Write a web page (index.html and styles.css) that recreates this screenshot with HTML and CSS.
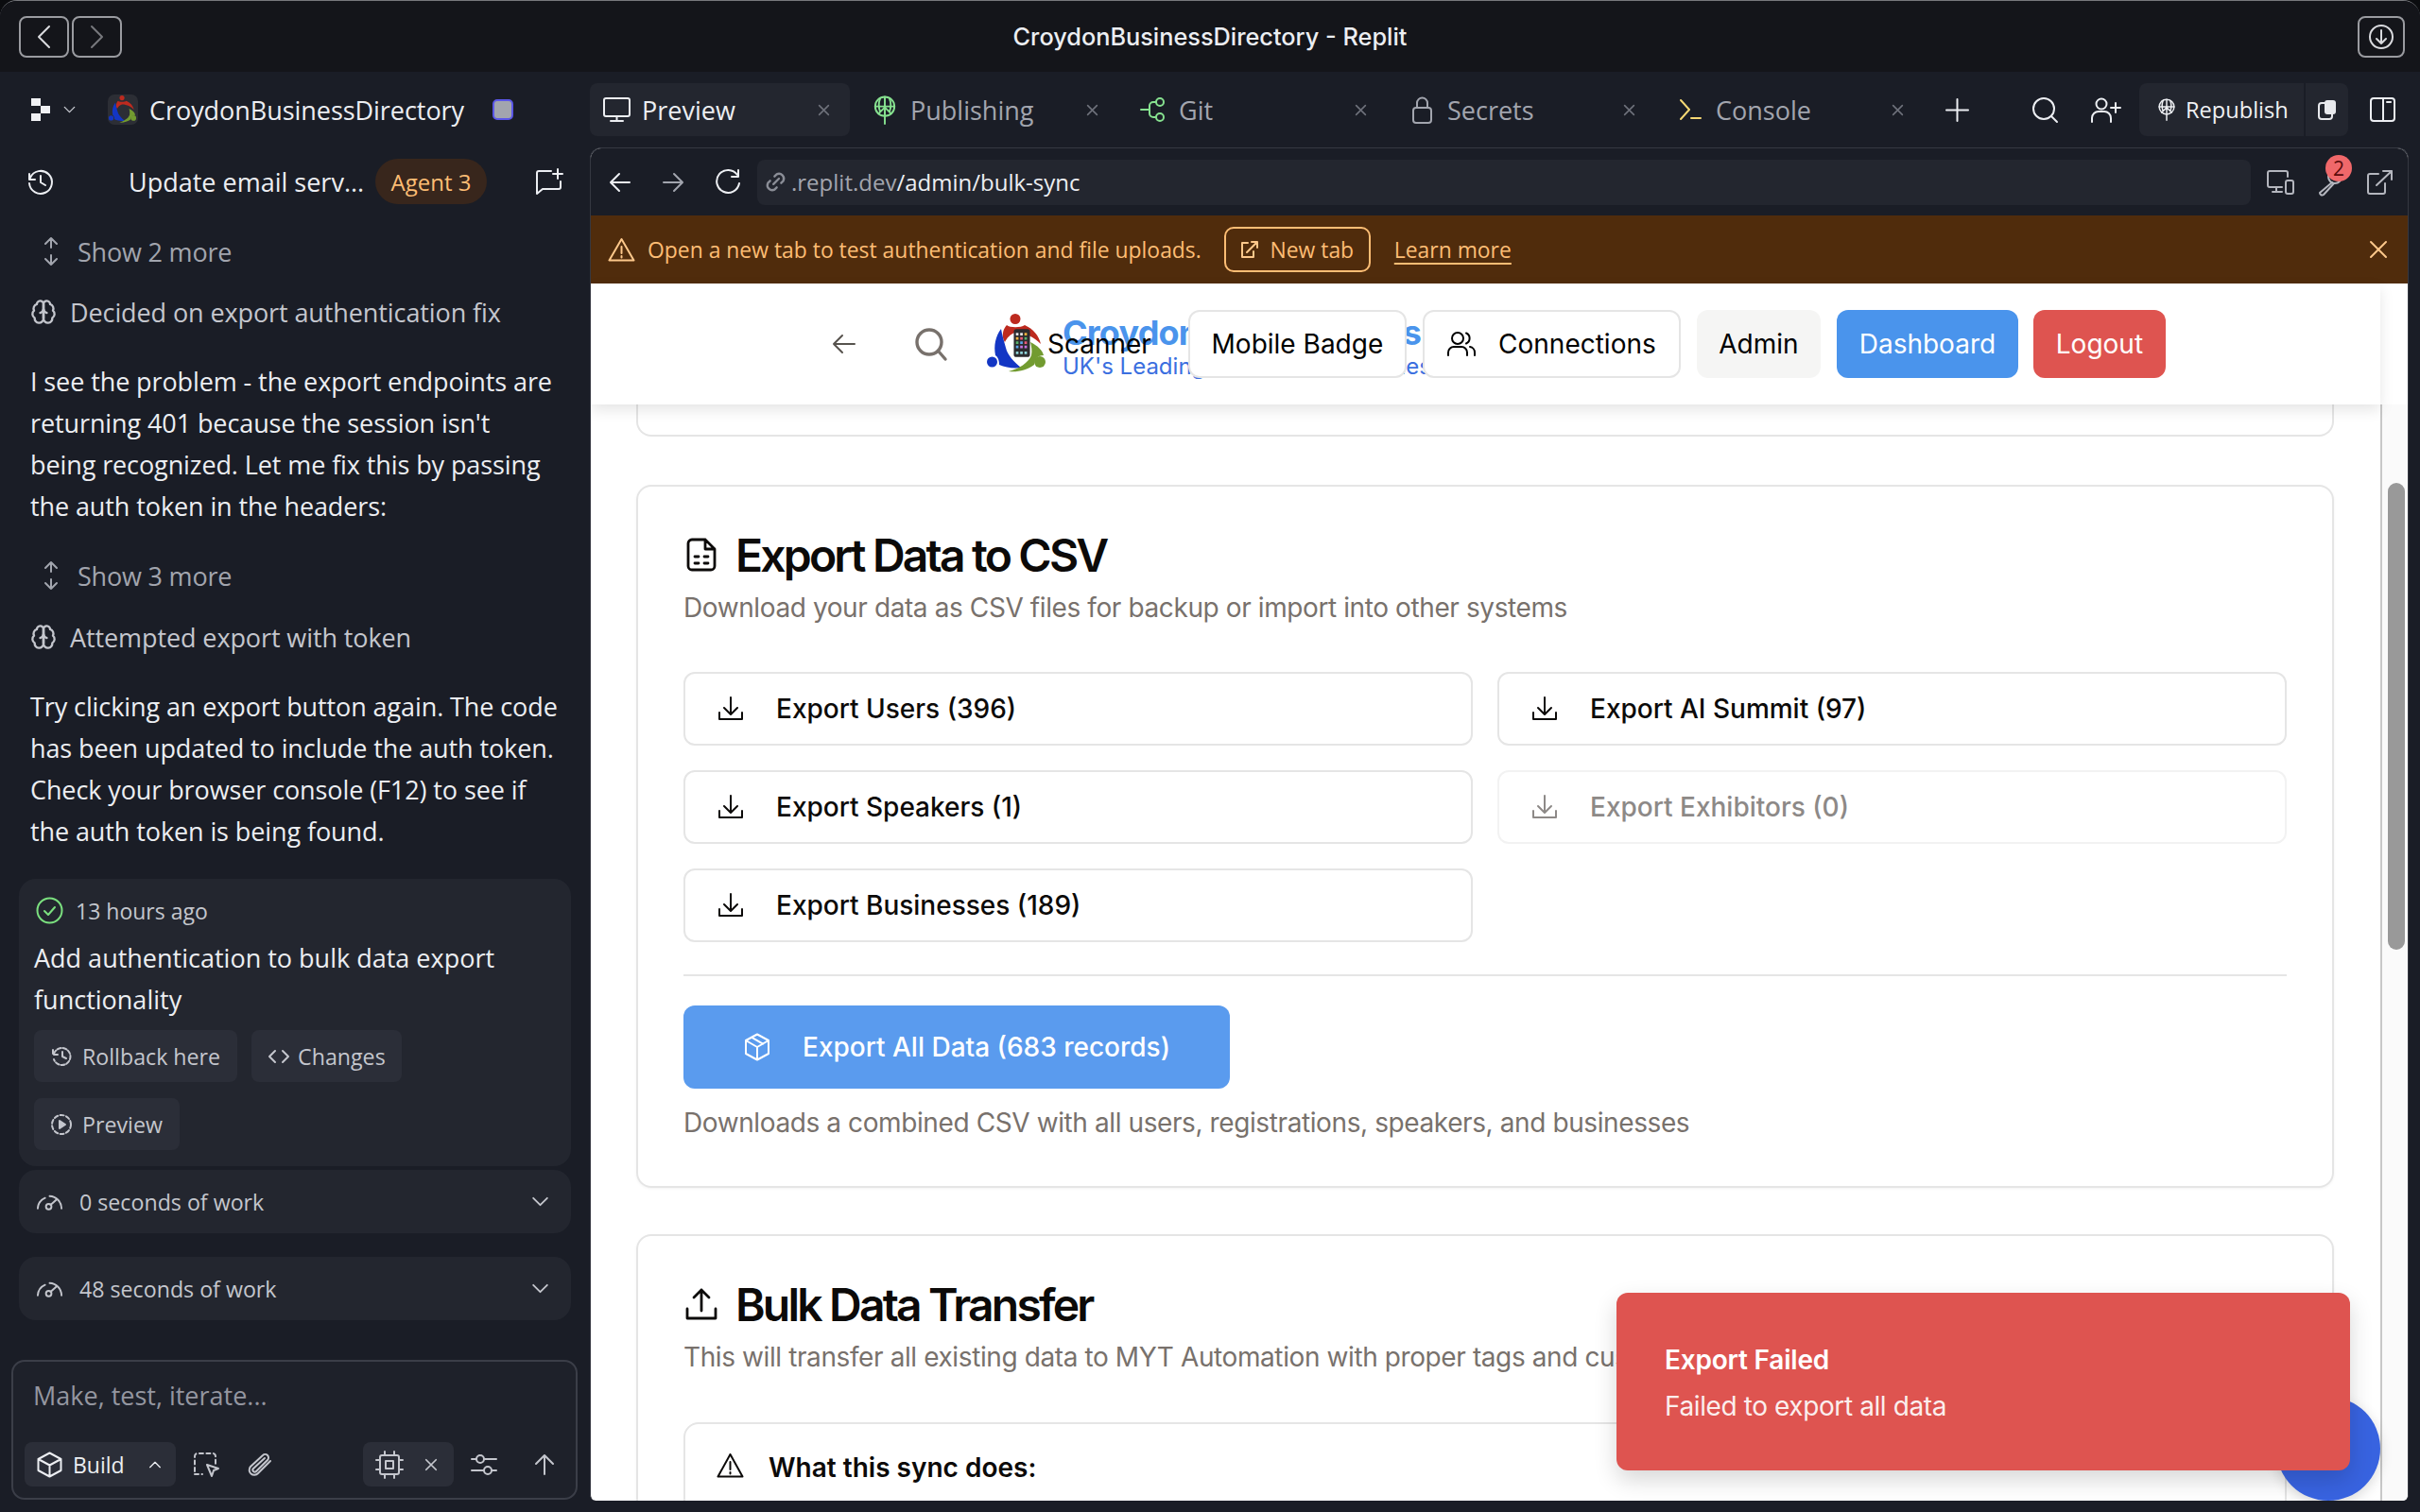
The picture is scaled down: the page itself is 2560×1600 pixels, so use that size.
FILE: index.html
```html
<!DOCTYPE html>
<html lang="en">
<head>
  <meta charset="UTF-8">
  <title>CroydonBusinessDirectory - Replit</title>
  <link rel="stylesheet" href="styles.css">
</head>
<body>
  <svg class="sprites" width="0" height="0" aria-hidden="true">
    <symbol id="i-close" viewBox="0 0 16 16"><path d="M2 2l12 12M14 2L2 14"/></symbol>
    <symbol id="i-chev-down" viewBox="0 0 20 12"><path d="M2 2l8 8 8-8"/></symbol>
    <symbol id="i-gauge" viewBox="0 0 30 18"><path d="M2 16a13.500 13.500 0 0 1 8-11.500M15 2.500a13.500 13.500 0 0 1 13 13.500"/><circle cx="14" cy="14" r="3"/><path d="M16 12l7-6"/></symbol>
    <symbol id="i-download" viewBox="0 0 28 28"><path d="M14 2v17M7 13l7 7 7-7M2 18v7h24v-7"/></symbol>
    <symbol id="i-globe" viewBox="0 0 24 32"><circle cx="12" cy="12" r="10.500"/><path d="M1.500 12h21M12 1.500V31M5 20l7-7 7 7M7 3c-2 5-2 10 0 15M17 3c2 5 2 10 0 15"/></symbol>
    <symbol id="i-brain" viewBox="0 0 24 24"><path d="M12 5a3 3 0 1 0-5.997.125 4 4 0 0 0-2.526 5.770 4 4 0 0 0 .556 6.588A4 4 0 1 0 12 18Z"/><path d="M12 5a3 3 0 1 1 5.997.125 4 4 0 0 1 2.526 5.770 4 4 0 0 1-.556 6.588A4 4 0 1 1 12 18Z"/><path d="M12 5v13M15 13a4.500 4.500 0 0 1-3-4 4.500 4.500 0 0 1-3 4"/></symbol>
    <symbol id="i-updown" viewBox="0 0 16 32"><path d="M8 2v10M2 8l6-6 6 6M8 20v10M2 24l6 6 6-6"/></symbol>
    <symbol id="i-logo" viewBox="0 0 64 64">
      <circle cx="30" cy="5.500" r="5.500" fill="#bd2a1f"/>
      <path d="M21 12C24 15 36 15 40 12 49 16 55 23 57 32 50 25 42 20 30 20 25 21 21 26 19 30 15 24 17 16 21 12z" fill="#bd2a1f"/>
      <circle cx="5.500" cy="51" r="5.500" fill="#1336c4"/>
      <path d="M15 16C9 24 7 34 9 44 12 46 13 50 13 54 20 57 28 58 36 57 28 50 22 44 20 36 18 29 16 22 15 16z" fill="#1336c4"/>
      <circle cx="56" cy="51" r="6" fill="#729b30"/>
      <path d="M46 30C54 34 59 39 60 44 54 44 50 48 50 54 42 60 32 62 23 61 34 58 44 52 47 44 48 39 47 34 46 30z" fill="#729b30"/>
    </symbol>
  </svg>

  <div class="window">
    <header class="titlebar">
      <div class="hist-btns">
        <button class="frame-btn"><svg class="ic" width="15" height="26" viewBox="0 0 15 26"><path d="M13 2L2 13l11 11"/></svg></button>
        <button class="frame-btn frame-btn-dim"><svg class="ic" width="15" height="26" viewBox="0 0 15 26"><path d="M2 2l11 11L2 24"/></svg></button>
      </div>
      <div class="win-title">CroydonBusinessDirectory - Replit</div>
      <button class="frame-btn frame-btn-dl"><svg class="ic" width="26" height="26" viewBox="0 0 26 26"><circle cx="13" cy="13" r="12"/><path d="M13 6v14M8 15l5 5 5-5"/></svg></button>
    </header>

    <div class="workspace">
      <aside class="sidebar">
        <div class="side-head">
          <svg class="replit-mark" width="20" height="24" viewBox="0 0 20 24"><path d="M0 0h10v8H0zM10 8h10v8H10zM0 16h10v8H0z" fill="#f0f1f4"/></svg>
          <svg class="ic chev-small" width="13" height="8"><use href="#i-chev-down"/></svg>
          <span class="app-icon"><svg width="30" height="30"><use href="#i-logo"/></svg></span>
          <span class="app-name">CroydonBusinessDirectory</span>
          <span class="app-status"></span>
        </div>

        <div class="agent-row">
          <svg class="ic" width="29" height="26" viewBox="0 0 29 26"><path d="M3 5v6h6M4 9a12 12 0 1 1-1 6M15 7v7l5 3"/></svg>
          <span class="agent-title">Update email serv...</span>
          <span class="agent-pill">Agent 3</span>
          <svg class="ic new-chat" width="28" height="28" viewBox="0 0 28 28"><path d="M16 3H3a2 2 0 0 0-2 2v22l6-5h17a2 2 0 0 0 2-2v-6M23 1v10M18 6h10"/></svg>
        </div>

        <div class="show-more"><svg class="ic" width="16" height="32"><use href="#i-updown"/></svg>Show 2 more</div>
        <div class="thought thought-a"><svg class="ic" width="28" height="28"><use href="#i-brain"/></svg>Decided on export authentication fix</div>
        <p class="agent-text">I see the problem - the export endpoints are returning 401 because the session isn't being recognized. Let me fix this by passing the auth token in the headers:</p>

        <div class="show-more show-more-b"><svg class="ic" width="16" height="32"><use href="#i-updown"/></svg>Show 3 more</div>
        <div class="thought thought-b"><svg class="ic" width="28" height="28"><use href="#i-brain"/></svg>Attempted export with token</div>
        <p class="agent-text">Try clicking an export button again. The code has been updated to include the auth token. Check your browser console (F12) to see if the auth token is being found.</p>

        <section class="checkpoint">
          <div class="cp-time">
            <svg class="ic cp-check" width="29" height="29" viewBox="0 0 29 29"><circle cx="14.500" cy="14.500" r="13"/><path d="M9 15l4 4 7-8"/></svg>
            13 hours ago
          </div>
          <div class="cp-title">Add authentication to bulk data export functionality</div>
          <div class="cp-actions">
            <button class="cp-btn"><svg class="ic" width="22" height="20" viewBox="0 0 22 20"><path d="M2 3v5h5M3 7a9 9 0 1 1 0 6" stroke-dasharray="4 2"/><path d="M12 5v5l4 2"/></svg>Rollback here</button>
            <button class="cp-btn cp-btn-code"><svg class="ic" width="24" height="16" viewBox="0 0 24 16"><path d="M8 2L2 8l6 6M16 2l6 6-6 6"/></svg>Changes</button>
            <button class="cp-btn"><svg class="ic" width="22" height="22" viewBox="0 0 22 22"><circle cx="11" cy="11" r="10" stroke-dasharray="4 2.500"/><path d="M9 7l6 4-6 4z" fill="currentColor"/></svg>Preview</button>
          </div>
        </section>

        <div class="work-row"><svg class="ic" width="29" height="18"><use href="#i-gauge"/></svg><span>0 seconds of work</span><svg class="ic work-chev" width="19" height="11"><use href="#i-chev-down"/></svg></div>
        <div class="work-row work-row-b"><svg class="ic" width="29" height="18"><use href="#i-gauge"/></svg><span>48 seconds of work</span><svg class="ic work-chev" width="19" height="11"><use href="#i-chev-down"/></svg></div>

        <div class="composer">
          <div class="composer-hint">Make, test, iterate...</div>
          <div class="composer-tools">
            <div class="chip chip-build">
              <svg class="ic" width="27" height="28" viewBox="0 0 27 28"><path d="M13.500 1.500l12 6.500v12l-12 6.500-12-6.500V8zM1.500 8l12 6.500L25.500 8M13.500 14.500v12"/></svg>
              <span>Build</span>
              <svg class="ic chev-up" width="14" height="8" viewBox="0 0 20 12"><path d="M2 10l8-8 8 8"/></svg>
            </div>
            <svg class="ic tool-select" width="27" height="26" viewBox="0 0 27 26"><path d="M1 20V4a3 3 0 0 1 3-3h16a3 3 0 0 1 3 3v8M1 23h8" stroke-dasharray="4 3.500"/><path d="M14 13l12 4-5 2-2 6z"/></svg>
            <svg class="ic tool-clip" width="26" height="26" viewBox="0 0 26 26"><path d="M24 9L11 22a5 5 0 0 1-8-7L16 3a3.500 3.500 0 0 1 5 5L9 20a2 2 0 0 1-3-3L18 6"/></svg>
            <div class="chip chip-model">
              <svg class="ic" width="30" height="30" viewBox="0 0 30 30"><rect x="5" y="5" width="20" height="20" rx="2"/><rect x="11" y="11" width="8" height="8"/><path d="M10 1v4M20 1v4M10 25v4M20 25v4M1 10h4M1 20h4M25 10h4M25 20h4"/></svg>
              <svg class="ic" width="14" height="14"><use href="#i-close"/></svg>
            </div>
            <svg class="ic tool-sliders" width="28" height="22" viewBox="0 0 28 22"><path d="M1 5h5M15 5h12M1 17h13M22 17h5"/><circle cx="10" cy="5" r="4"/><circle cx="18" cy="17" r="4"/></svg>
            <svg class="ic tool-send" width="22" height="22" viewBox="0 0 22 22"><path d="M11 21V2M2 10l9-9 9 9"/></svg>
          </div>
        </div>
      </aside>

      <main class="main">
        <div class="tabs">
          <div class="tab tab-active">
            <span class="tab-icon"><svg class="ic ic-light" width="29" height="26" viewBox="0 0 29 26"><rect x="1" y="1" width="27" height="19" rx="2"/><path d="M14.500 20v5M8 25h13"/></svg></span>
            <span class="tab-name">Preview</span>
            <svg class="ic tab-close" width="13" height="13"><use href="#i-close"/></svg>
          </div>
          <div class="tab">
            <span class="tab-icon"><svg class="ic ic-green" width="24" height="31"><use href="#i-globe"/></svg></span>
            <span class="tab-name">Publishing</span>
            <svg class="ic tab-close" width="13" height="13"><use href="#i-close"/></svg>
          </div>
          <div class="tab">
            <span class="tab-icon"><svg class="ic ic-green" width="28" height="26" viewBox="0 0 28 26"><circle cx="21" cy="5" r="4"/><circle cx="21" cy="21" r="4"/><path d="M1 13h9M17 5h-3a4 4 0 0 0-4 4v8a4 4 0 0 0 4 4h3"/></svg></span>
            <span class="tab-name">Git</span>
            <svg class="ic tab-close" width="13" height="13"><use href="#i-close"/></svg>
          </div>
          <div class="tab">
            <span class="tab-icon"><svg class="ic" width="21" height="29" viewBox="0 0 21 29"><rect x="1" y="12" width="19" height="16" rx="3"/><path d="M5 12V7a5.500 5.500 0 0 1 11 0v5"/></svg></span>
            <span class="tab-name">Secrets</span>
            <svg class="ic tab-close" width="13" height="13"><use href="#i-close"/></svg>
          </div>
          <div class="tab">
            <span class="tab-icon"><svg class="ic ic-yellow" width="24" height="22" viewBox="0 0 24 22"><path d="M2 1l9 10-9 10M13 20h10"/></svg></span>
            <span class="tab-name">Console</span>
            <svg class="ic tab-close" width="13" height="13"><use href="#i-close"/></svg>
          </div>
          <svg class="ic ic-light tab-plus" width="23" height="23" viewBox="0 0 23 23"><path d="M11.500 0v23M0 11.500h23"/></svg>
          <svg class="ic ic-light head-search" width="27" height="26" viewBox="0 0 27 26"><circle cx="12" cy="12" r="11"/><path d="M20 20l6 6"/></svg>
          <svg class="ic ic-light head-invite" width="32" height="26" viewBox="0 0 32 26"><circle cx="12" cy="7" r="5.500"/><path d="M2 26v-4a7 7 0 0 1 7-7h6a7 7 0 0 1 7 7v4M27 6v10M22 11h10"/></svg>
          <div class="republish">
            <span class="republish-main">
              <svg class="ic ic-light" width="18" height="30"><use href="#i-globe"/></svg>
              Republish
            </span>
            <span class="republish-side">
              <svg width="20" height="22" viewBox="0 0 20 22"><rect x="1" y="4" width="14" height="17" rx="3" fill="none" stroke="#e8e9ed" stroke-width="2"/><rect x="7" y="1" width="12" height="15" rx="3" fill="#e8e9ed"/></svg>
            </span>
          </div>
          <svg class="ic ic-light head-panel" width="27" height="26" viewBox="0 0 27 26"><rect x="1" y="1" width="25" height="24" rx="3"/><path d="M14 1v24M18 5h4"/></svg>
        </div>

        <div class="pane">
          <div class="addressbar">
            <svg class="ic ic-light nav-back" width="21" height="20" viewBox="0 0 21 20"><path d="M21 10H2M10 1l-9 9 9 9"/></svg>
            <svg class="ic nav-fwd" width="21" height="20" viewBox="0 0 21 20"><path d="M0 10h19M11 1l9 9-9 9"/></svg>
            <svg class="ic ic-light nav-reload" width="30" height="27" viewBox="0 0 30 27"><path d="M25 6a12 12 0 1 0 2 9M26 1v7h-7"/></svg>
            <div class="url-field">
              <svg class="ic url-link" width="21" height="21" viewBox="1 1 18 18"><path d="M8 12l5-5M9 5l2-2a4.500 4.500 0 0 1 6 6l-2 2M11 15l-2 2a4.500 4.500 0 0 1-6-6l2-2"/></svg>
              <span class="url-host">.replit.dev</span><span class="url-path">/admin/bulk-sync</span>
            </div>
            <svg class="ic addr-devices" width="29" height="26" viewBox="0 0 29 26"><path d="M16 18H3a2 2 0 0 1-2-2V3a2 2 0 0 1 2-2h17a2 2 0 0 1 2 2v4M10 18v5M6 23h10"/><rect x="20" y="11" width="8" height="14" rx="2"/></svg>
            <span class="addr-key">
              <svg class="ic" width="26" height="28" viewBox="0 0 26 28"><path d="M16 14L3 25a2.500 2.500 0 0 0 4 2l11-12"/><circle cx="19" cy="8" r="7"/></svg>
              <span class="key-badge">2</span>
            </span>
            <svg class="ic addr-open" width="27" height="26" viewBox="0 0 27 26"><path d="M12 4H3a2 2 0 0 0-2 2v17a2 2 0 0 0 2 2h14a2 2 0 0 0 2-2v-9M10 16L26 1M17 1h9v9"/></svg>
          </div>

          <div class="warnbar">
            <svg class="ic warn-ic" width="29" height="26" viewBox="0 0 29 26"><path d="M14.500 2L1.500 24.500h26zM14.500 10v7M14.500 20v1.500"/></svg>
            <span class="warn-text">Open a new tab to test authentication and file uploads.</span>
            <button class="warn-btn"><svg class="ic warn-ic" width="20" height="20" viewBox="0 0 20 20"><path d="M8 3H2v15h12v-6M7 13L18 2M12 2h6v6"/></svg>New tab</button>
            <a class="warn-link">Learn more</a>
            <svg class="ic warn-ic warn-close" width="20" height="18" viewBox="0 0 20 18"><path d="M2 1l16 16M18 1L2 17"/></svg>
          </div>

          <nav class="site-nav">
            <svg class="ic nav-arrow" width="24" height="22" viewBox="0 0 24 22"><path d="M24 11H2M11 2l-9 9 9 9"/></svg>
            <svg class="ic nav-search" width="33" height="34" viewBox="0 0 33 34"><circle cx="15" cy="15" r="13"/><path d="M25 25l7 8"/></svg>
            <div class="brand">
              <svg class="brand-logo" width="64" height="64"><use href="#i-logo"/></svg>
              <svg class="brand-phone" width="18" height="34" viewBox="0 0 20 34">
                <rect x="0.500" y="0.500" width="19" height="33" rx="3" fill="#2b2b2e"/>
                <path d="M3 5h3v3H3zM8 5h3v3H8z" fill="#e8e8e8"/><path d="M13 5h3v3h-3zM3 10h3v3H3z" fill="#f3b33d"/>
                <path d="M8 10h3v3H8zM13 15h3v3h-3z" fill="#ea5a7a"/><path d="M13 10h3v3h-3zM3 15h3v3H3z" fill="#59b36b"/>
                <path d="M8 15h3v3H8zM3 20h3v3H3z" fill="#5aa6e8"/><path d="M8 20h3v3H8zM13 20h3v3h-3z" fill="#c873e0"/>
                <path d="M3 27h3v3H3zM8 27h3v3H8zM13 27h3v3h-3z" fill="#8fd3d8"/>
              </svg>
              <div class="brand-text">
                <div class="brand-name">Croydon Businesses</div>
                <div class="brand-tag">UK's Leading Business Directories</div>
              </div>
            </div>
            <a class="nav-link">Scanner</a>
            <a class="nav-btn nav-btn-line">Mobile Badge</a>
            <a class="nav-btn nav-btn-line nav-btn-conn"><svg class="ic" width="30" height="26" viewBox="0 0 30 26"><circle cx="11" cy="7" r="6"/><path d="M1 25v-3a6 6 0 0 1 6-6h8a6 6 0 0 1 6 6v3M20 1.500a6 6 0 0 1 0 11M24 16a6 6 0 0 1 5 6v3"/></svg>Connections</a>
            <a class="nav-btn nav-btn-soft">Admin</a>
            <a class="nav-btn nav-btn-blue">Dashboard</a>
            <a class="nav-btn nav-btn-red">Logout</a>
          </nav>

          <div class="page">
            <div class="page-body">
              <div class="card-stub"></div>

              <section class="card">
                <h2 class="card-title">
                  <svg class="ic title-file" width="32" height="36" viewBox="0 0 32 36"><path d="M20 2H6a4 4 0 0 0-4 4v24a4 4 0 0 0 4 4h20a4 4 0 0 0 4-4V12zM20 2v10h10M9 20h4M19 20h4M9 27h4M19 27h4"/></svg>
                  Export Data to CSV
                </h2>
                <p class="card-sub">Download your data as CSV files for backup or import into other systems</p>
                <div class="export-grid">
                  <button class="export-btn"><svg class="ic" width="28" height="28"><use href="#i-download"/></svg>Export Users (396)</button>
                  <button class="export-btn"><svg class="ic" width="28" height="28"><use href="#i-download"/></svg>Export AI Summit (97)</button>
                  <button class="export-btn"><svg class="ic" width="28" height="28"><use href="#i-download"/></svg>Export Speakers (1)</button>
                  <button class="export-btn export-btn-off"><svg class="ic" width="28" height="28"><use href="#i-download"/></svg>Export Exhibitors (0)</button>
                  <button class="export-btn"><svg class="ic" width="28" height="28"><use href="#i-download"/></svg>Export Businesses (189)</button>
                </div>
                <div class="card-rule"></div>
                <button class="export-all">
                  <svg class="ic" width="28" height="30" viewBox="0 0 28 30"><path d="M14 1.500l12 6.500v14l-12 6.500L2 22V8zM2 8l12 7 12-7M14 15v13.500M8 4.700l12 7"/></svg>
                  Export All Data (683 records)
                </button>
                <p class="card-note">Downloads a combined CSV with all users, registrations, speakers, and businesses</p>
              </section>

              <section class="card card-bulk">
                <h2 class="card-title">
                  <svg class="ic title-upload" width="34" height="34" viewBox="0 0 34 34"><path d="M17 24V2M9 10l8-8 8 8M2 22v10h30V22"/></svg>
                  Bulk Data Transfer
                </h2>
                <p class="card-sub">This will transfer all existing data to MYT Automation with proper tags and custom fields</p>
                <div class="sync-box">
                  <svg class="ic" width="29" height="27" viewBox="0 0 29 27"><path d="M14.500 2L1.500 25.500h26zM14.500 10v8M14.500 21v1.500"/></svg>
                  What this sync does:
                </div>
              </section>
            </div>

            <div class="scroll-track"><div class="scroll-thumb"></div></div>

            <div class="fab"></div>
            <div class="toast">
              <div class="toast-title">Export Failed</div>
              <div class="toast-text">Failed to export all data</div>
            </div>
          </div>
        </div>
      </main>
    </div>
  </div>
</body>
</html>
```

FILE: styles.css
```css
* {
  box-sizing: border-box;
}
html, body {
  margin: 0;
  padding: 0;
  background: #0b0c0f;
}
body {
  font-family: 'Open Sans', sans-serif;
  color: #f0f1f4;
}
button {
  font: inherit;
  color: inherit;
  border: none;
  background: none;
  padding: 0;
}
.sprites {
  position: absolute;
}
.ic {
  fill: none;
  stroke: currentColor;
  stroke-width: 2;
  stroke-linecap: round;
  stroke-linejoin: round;
  flex: none;
  overflow: visible;
}
.ic-light {
  color: #eceef2;
}
.ic-green {
  color: #86e08f;
}
.ic-yellow {
  color: #f5d874;
}

.window {
  width: 2560px;
  height: 1600px;
  display: flex;
  flex-direction: column;
  background: #1a1d26;
  overflow: hidden;
  border-radius: 18px 18px 0 0;
  border-top: 1px solid #77787c;
}

/* title bar */
.titlebar {
  height: 75px;
  flex: none;
  background: #14151a;
  display: flex;
  align-items: center;
  padding: 0 16px 0 20px;
  position: relative;
}
.hist-btns {
  display: flex;
  gap: 3px;
}
.frame-btn {
  width: 53px;
  height: 44px;
  border: 2px solid #9a9ba0;
  border-radius: 8px;
  display: flex;
  align-items: center;
  justify-content: center;
  color: #d9dade;
}
.frame-btn-dim {
  color: #77787d;
}
.frame-btn-dl {
  margin-left: auto;
  width: 50px;
}
.win-title {
  position: absolute;
  left: 0;
  right: 0;
  text-align: center;
  font-family: 'Inter', sans-serif;
  font-size: 25.3px;
  font-weight: 500;
  color: #eceef2;
}

.workspace {
  flex: 1;
  display: flex;
  min-height: 0;
}

/* left agent column */
.sidebar {
  width: 624px;
  flex: none;
  display: flex;
  flex-direction: column;
  font-size: 27px;
  color: #eceef2;
}
.side-head {
  height: 80px;
  flex: none;
  display: flex;
  align-items: center;
  padding-left: 33px;
}
.chev-small {
  margin-left: 14px;
  color: #c9cbd2;
}
.app-icon {
  width: 32px;
  height: 32px;
  margin-left: 34px;
  border-radius: 7px;
  background: #2c2e35;
  display: flex;
  align-items: center;
  justify-content: center;
}
.app-name {
  margin-left: 12px;
  font-size: 27px;
  letter-spacing: -0.05px;
}
.app-status {
  width: 22px;
  height: 22px;
  margin-left: 30px;
  border: 2px solid #5b57e8;
  border-radius: 5px;
  background: #a2a5ae;
}
.agent-row {
  height: 72px;
  flex: none;
  display: flex;
  align-items: center;
  padding-left: 28px;
}
.agent-title {
  margin-left: 79px;
  width: 261px;
  white-space: nowrap;
}
.agent-pill {
  width: 118px;
  height: 48px;
  border-radius: 24px;
  background: #38261c;
  color: #fdbd74;
  font-size: 24px;
  display: flex;
  align-items: center;
  justify-content: center;
}
.new-chat {
  margin-left: 52px;
}
.show-more {
  height: 40px;
  margin: 18px 0 0 46px;
  display: flex;
  align-items: center;
  gap: 20px;
  color: #a2a5ae;
  letter-spacing: -0.2px;
}
.show-more-b {
  margin-top: 31px;
}
.thought {
  height: 40px;
  margin: 24px 0 0 32px;
  display: flex;
  align-items: center;
  gap: 14px;
  color: #c4c6cd;
  letter-spacing: -0.1px;
}
.thought-b {
  margin-top: 25px;
}
.agent-text {
  margin: 32px 34px 0 32px;
  line-height: 44px;
  letter-spacing: -0.1px;
}
.checkpoint {
  margin: 28px 20px 0;
  height: 304px;
  flex: none;
  background: #23262f;
  border-radius: 18px;
  padding: 19px 16px 0;
}
.cp-time {
  height: 29px;
  display: flex;
  align-items: center;
  gap: 13px;
  padding-left: 2px;
  font-size: 23px;
  color: #c4c6cd;
}
.cp-check {
  color: #7be07f;
}
.cp-title {
  margin-top: 14px;
  line-height: 44px;
}
.cp-actions {
  display: flex;
  flex-wrap: wrap;
  gap: 17px 15px;
  margin-top: 10px;
}
.cp-btn {
  height: 55px;
  padding: 0 18px;
  background: #2b2e38;
  border-radius: 8px;
  display: flex;
  align-items: center;
  gap: 11px;
  font-size: 23.2px;
  color: #c4c6cd;
}
.cp-btn-code {
  padding: 0 17px;
  gap: 8px;
}
.work-row {
  margin: 4px 20px 0;
  height: 67px;
  flex: none;
  background: #23262f;
  border-radius: 18px;
  display: flex;
  align-items: center;
  padding-left: 18px;
  gap: 17px;
  font-size: 23.2px;
  color: #c4c6cd;
}
.work-row-b {
  margin-top: 25px;
}
.work-chev {
  margin-left: auto;
  margin-right: 23px;
}
.composer {
  margin: auto 13px 13px 12px;
  height: 148px;
  flex: none;
  border: 2px solid #3b3e48;
  border-radius: 14px;
  background: #1e212a;
  padding: 0 12px;
  display: flex;
  flex-direction: column;
}
.composer-hint {
  margin: 20px 0 0 9px;
  line-height: 32px;
  color: #9496a0;
}
.composer-tools {
  margin-top: auto;
  margin-bottom: 12px;
  display: flex;
  align-items: center;
  color: #c4c6cd;
}
.chip {
  height: 47px;
  background: #2b2e38;
  border-radius: 8px;
  display: flex;
  align-items: center;
}
.chip-build {
  width: 160px;
  padding-left: 13px;
  gap: 11px;
  font-size: 23px;
  color: #eceef2;
}
.chev-up {
  margin-left: auto;
  margin-right: 15px;
}
.tool-select {
  margin-left: 19px;
}
.tool-clip {
  margin-left: 30px;
}
.chip-model {
  width: 96px;
  margin-left: 96px;
  padding-left: 13px;
  gap: 22px;
}
.tool-sliders {
  margin-left: 18px;
}
.tool-send {
  margin-left: 39px;
}

/* right side */
.main {
  flex: 1;
  min-width: 0;
  display: flex;
  flex-direction: column;
  padding: 12px 12px 12px 0;
}
.tabs {
  height: 56px;
  flex: none;
  display: flex;
  align-items: center;
  gap: 9px;
  margin-right: -12px;
}
.tab {
  width: 275px;
  height: 56px;
  flex: none;
  border-radius: 8px;
  display: flex;
  align-items: center;
  padding: 0 21px 0 13px;
  color: #a2a5ae;
  font-size: 27px;
}
.tab-active {
  background: #23262f;
  color: #eceef2;
}
.tab-icon {
  width: 30px;
  margin-right: 12px;
  display: flex;
  justify-content: center;
}
.tab-close {
  margin-left: auto;
  color: #6d707a;
}
.tab-plus {
  margin-left: 15px;
}
.head-search {
  margin-left: 59px;
}
.head-invite {
  margin-left: 25px;
}
.republish {
  margin-left: 11px;
  width: 221px;
  height: 56px;
  flex: none;
  background: #23262f;
  border-radius: 8px;
  display: flex;
  font-size: 23.6px;
}
.republish-main {
  width: 176px;
  padding-left: 20px;
  display: flex;
  align-items: center;
  gap: 11px;
  border-right: 2px solid #1a1d26;
}
.republish-side {
  flex: 1;
  display: flex;
  align-items: center;
  justify-content: center;
}
.head-panel {
  margin-left: 14px;
}
.pane {
  flex: 1;
  min-height: 0;
  margin-top: 12px;
  display: flex;
  flex-direction: column;
  border: 1px solid #353841;
  border-bottom: none;
  border-radius: 12px 12px 6px 6px;
  overflow: hidden;
  background: #fff;
}
.addressbar {
  height: 71px;
  flex: none;
  background: #1a1d26;
  display: flex;
  align-items: center;
  padding-left: 20px;
}
.nav-fwd {
  margin-left: 36px;
  color: #a2a5ae;
}
.nav-reload {
  margin-left: 32px;
}
.url-field {
  width: 1580px;
  height: 48px;
  margin-left: 16px;
  background: #23262f;
  border-radius: 8px;
  display: flex;
  align-items: center;
  padding-left: 9px;
  font-size: 24px;
  white-space: nowrap;
}
.url-link {
  color: #8a8d96;
  margin-right: 6px;
}
.url-host {
  color: #a2a5ae;
}
.url-path {
  color: #eceef2;
}
.addr-devices,
.addr-key,
.addr-open {
  color: #b4b6be;
}
.addr-devices {
  margin-left: 17px;
}
.addr-key {
  margin-left: 24px;
  position: relative;
  display: flex;
}
.key-badge {
  position: absolute;
  left: 9px;
  top: -15px;
  width: 28px;
  height: 28px;
  border-radius: 50%;
  background: #f0686a;
  color: #5a0b0b;
  font-size: 21px;
  text-align: center;
  line-height: 28px;
}
.addr-open {
  margin-left: 27px;
}
.warnbar {
  height: 72px;
  flex: none;
  background: #502c0c;
  color: #fdbd74;
  display: flex;
  align-items: center;
  padding-left: 18px;
  font-size: 22.9px;
}
.warn-ic {
  color: #fdc88b;
}
.warn-text {
  margin-left: 13px;
  white-space: nowrap;
}
.warn-btn {
  width: 155px;
  height: 48px;
  margin-left: 24px;
  border: 2px solid #fdbd74;
  border-radius: 10px;
  display: flex;
  align-items: center;
  justify-content: center;
  gap: 11px;
}
.warn-link {
  margin-left: 25px;
  text-decoration: underline;
  text-underline-offset: 5px;
}
.warn-close {
  margin-left: auto;
  margin-right: 21px;
}

/* site nav inside the preview */
.site-nav {
  height: 128px;
  flex: none;
  position: relative;
  z-index: 2;
  margin-right: 29px;
  background: #fff;
  box-shadow: 0 6px 14px rgba(0, 0, 0, 0.1);
  display: flex;
  align-items: center;
  padding-left: 255px;
  font-family: 'Inter', sans-serif;
  font-size: 28px;
  color: #000;
}
.nav-arrow {
  color: #57534e;
}
.nav-search {
  color: #78716c;
  margin-left: 64px;
  stroke-width: 3.4;
}
.brand {
  width: 64px;
  height: 64px;
  margin-left: 43px;
  position: relative;
}
.brand-logo {
  display: block;
}
.brand-phone {
  position: absolute;
  left: 28px;
  top: 14px;
}
.brand-text {
  position: absolute;
  left: 80px;
  top: 0;
  white-space: nowrap;
}
.brand-name {
  font-size: 36px;
  font-weight: 700;
  line-height: 40px;
  letter-spacing: -0.8px;
  word-spacing: 33px;
  color: #4a94ec;
}
.brand-tag {
  font-size: 24px;
  line-height: 32px;
  color: #3b6fe0;
}
.nav-link {
  position: relative;
  margin-right: 39px;
}
.nav-btn {
  position: relative;
  height: 72px;
  padding: 0 26px;
  margin-right: 17px;
  border-radius: 12px;
  display: flex;
  align-items: center;
  background: #fff;
}
.nav-btn-line {
  border: 2px solid #e5e5e5;
  width: 231px;
  justify-content: center;
  padding: 0;
}
.nav-btn-conn {
  width: 273px;
  gap: 24px;
}
.nav-btn-soft {
  background: #f5f5f4;
  width: 131px;
  justify-content: center;
  padding: 0;
}
.nav-btn-blue {
  background: #4a94ec;
  color: #fff;
  width: 192px;
  justify-content: center;
  padding: 0;
  margin-right: 16px;
}
.nav-btn-red {
  background: #de5450;
  color: #fff;
  width: 140px;
  justify-content: center;
  padding: 0;
}

/* page content under the nav */
.page {
  flex: 1;
  min-height: 0;
  position: relative;
  display: flex;
  overflow: hidden;
  font-family: 'Inter', sans-serif;
  color: #0c0a09;
}
.page-body {
  flex: 1;
  min-width: 0;
  padding: 0 49px 0 48px;
}
.card-stub {
  height: 34px;
  border: 2px solid #e5e5e5;
  border-top: none;
  border-radius: 0 0 16px 16px;
}
.card {
  margin-top: 51px;
  border: 2px solid #e5e5e5;
  border-radius: 16px;
  padding: 48px 48px 51px;
  box-shadow: 0 1px 3px rgba(0, 0, 0, 0.05);
}
.card-bulk {
  margin-top: 49px;
}
.card-title {
  margin: 0;
  height: 48px;
  display: flex;
  align-items: center;
  gap: 20px;
  font-size: 48px;
  font-weight: 600;
  letter-spacing: -2.8px;
}
.card-title .ic {
  stroke-width: 2.8;
}
.title-file {
  margin-left: 3px;
}
.title-upload {
  margin-left: 2px;
  margin-right: -1px;
}
.card-sub {
  margin: 16px 0 0;
  font-size: 28px;
  line-height: 32px;
  letter-spacing: -0.4px;
  color: #78716c;
  white-space: nowrap;
}
.export-grid {
  display: grid;
  grid-template-columns: 1fr 1fr;
  gap: 26px;
  margin-top: 52px;
}
.export-btn {
  height: 78px;
  border: 2px solid #e5e5e5;
  border-radius: 12px;
  background: #fff;
  display: flex;
  align-items: center;
  gap: 34px;
  padding-left: 34px;
  font-family: 'Inter', sans-serif;
  font-size: 28px;
  font-weight: 450;
  color: #0c0a09;
}
.export-btn-off {
  border-color: #f2f2f2;
  color: #8d8987;
}
.card-rule {
  height: 2px;
  margin-top: 34px;
  background: #e5e5e5;
}
.export-all {
  width: 578px;
  height: 88px;
  margin-top: 31px;
  border-radius: 12px;
  background: #5a9bee;
  color: #fff;
  display: flex;
  align-items: center;
  gap: 34px;
  padding-left: 64px;
  font-family: 'Inter', sans-serif;
  font-size: 28px;
  font-weight: 450;
}
.card-note {
  margin: 20px 0 0;
  font-size: 28px;
  line-height: 32px;
  letter-spacing: -0.4px;
  color: #78716c;
}
.sync-box {
  margin-top: 53px;
  border: 2px solid #e5e5e5;
  border-radius: 16px;
  padding: 30px 33px 60px;
  display: flex;
  align-items: flex-start;
  gap: 26px;
  height: 160px;
  font-size: 28px;
  font-weight: 600;
  line-height: 32px;
}
.scroll-track {
  width: 29px;
  flex: none;
  background: #fafafa;
  border-left: 2px solid #c8c8c8;
  position: relative;
}
.scroll-thumb {
  position: absolute;
  left: 6px;
  right: 3px;
  top: 83px;
  height: 494px;
  border-radius: 10px;
  background: #999;
}
.fab {
  position: absolute;
  right: 29px;
  bottom: 0;
  width: 110px;
  height: 110px;
  border-radius: 50%;
  background: #3863e0;
  box-shadow: 0 4px 14px rgba(0, 0, 0, 0.15);
}
.toast {
  position: absolute;
  right: 61px;
  bottom: 32px;
  width: 776px;
  height: 188px;
  border-radius: 12px;
  background: #de5450;
  color: #fff;
  padding: 55px 51px 0;
  box-shadow: 0 10px 24px rgba(0, 0, 0, 0.16);
}
.toast-title {
  font-size: 28px;
  font-weight: 600;
  line-height: 32px;
  letter-spacing: -0.2px;
}
.toast-text {
  margin-top: 17px;
  font-size: 28px;
  line-height: 32px;
  letter-spacing: -0.4px;
  opacity: 0.9;
}
```
